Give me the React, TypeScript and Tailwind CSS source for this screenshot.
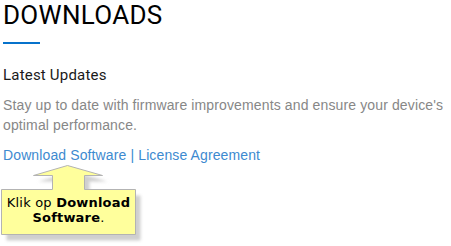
export default function App() {
  return (
    <div className="w-[451px] h-[246px] overflow-hidden bg-white pl-[3px]">
      <h1 className="font-['Roboto',sans-serif] text-[26px] leading-[30px] font-normal tracking-[0.3px] text-black">
        DOWNLOADS
      </h1>
      <div className="mt-[12px] h-[2px] w-[37px] bg-[#0672cb]" />

      <h2 className="mt-[21px] font-['Roboto',sans-serif] text-[15px] leading-[20px] tracking-[0.2px] text-[#1a1a1a]">
        Latest Updates
      </h2>
      <p className="mt-[10px] font-['Liberation_Sans',Arial,sans-serif] text-[14px] leading-[20px] tracking-[0.13px] text-[#878787]">
        Stay up to date with firmware improvements and ensure your device's
        <br />
        optimal performance.
      </p>

      <div className="mt-[10px] font-['Liberation_Sans',Arial,sans-serif] text-[14px] leading-[20px] tracking-[0.12px] text-[#3d8ad0]">
        <a href="#">Download Software</a> | <a href="#">License Agreement</a>
      </div>

      {/* callout */}
      <div className="relative -ml-[3px] h-[81px] w-[145px]">
        <svg className="absolute inset-0" width="145" height="81" viewBox="0 0 145 81">
          <defs>
            <filter id="sh" x="-10%" y="-10%" width="130%" height="130%">
              <feGaussianBlur stdDeviation="1.6" />
            </filter>
          </defs>
          <path
            d="M67.5 0.5 L102.5 10.5 L84.5 10.5 L84.5 24.5 L135.5 24.5 L135.5 69.5 L1.5 69.5 L1.5 24.5 L52.5 24.5 L52.5 10.5 L33.5 10.5 Z"
            transform="translate(5 6)"
            fill="#cfcfcf"
            filter="url(#sh)"
          />
          <path
            d="M67.5 0.5 L102.5 10.5 L84.5 10.5 L84.5 24.5 L135.5 24.5 L135.5 69.5 L1.5 69.5 L1.5 24.5 L52.5 24.5 L52.5 10.5 L33.5 10.5 Z"
            fill="#ffff9c"
            stroke="#b3b3b3"
            strokeWidth="1"
          />
        </svg>
        <div className="absolute left-[1px] top-[30px] w-[135px] text-center font-['DejaVu_Sans',Verdana,sans-serif] text-[13px] leading-[15px] tracking-[0.2px] text-black">
          Klik op <b>Download</b>
          <br />
          <b>Software</b>.
        </div>
      </div>
    </div>
  );
}
